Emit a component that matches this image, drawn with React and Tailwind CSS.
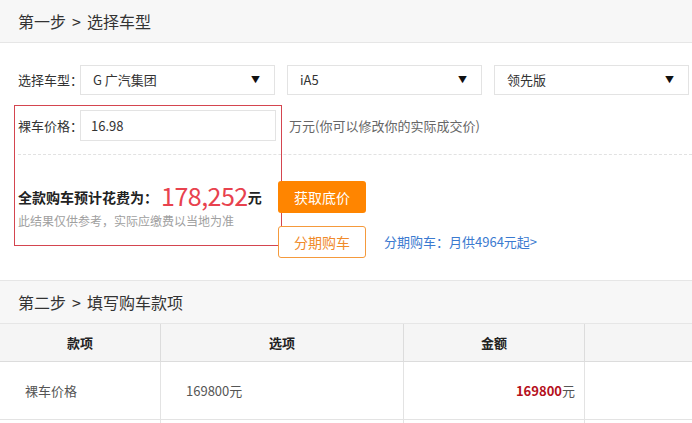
import React from 'react';

const Select = ({ value }) => (
  <div className="w-[195px] h-[30px] border border-[#e3e3e3] bg-white flex items-center justify-between pl-[12px] pr-[14px] text-[13px] text-[#333]">
    <span>{value}</span>
    <span className="text-[9px] text-[#111]">▼</span>
  </div>
);

const StepHeader = ({ first, second, top }) => (
  <div
    className={`bg-[#f7f7f7] border-b border-[#e6e6e6] flex items-center pl-[18px] text-[16px] text-[#333] ${
      top ? 'border-t h-[44px]' : 'h-[43px]'
    }`}
  >
    <span>{first}</span>
    <span className="mx-[6px]">&gt;</span>
    <span>{second}</span>
  </div>
);

const App = () => {
  return (
    <div
      className="relative w-[692px] h-[423px] overflow-hidden bg-white"
      style={{ fontFamily: "'Noto Sans CJK SC', 'Noto Sans', sans-serif" }}
    >
      {/* Step 1 */}
      <StepHeader first="第一步" second="选择车型" />

      {/* Model selects */}
      <div className="flex items-center mt-[22px] pl-[18px]">
        <span className="w-[62px] shrink-0 whitespace-nowrap text-[13px] text-[#333]">选择车型：</span>
        <div className="flex gap-[12px]">
          <Select value="G 广汽集团" />
          <Select value="iA5" />
          <Select value="领先版" />
        </div>
      </div>

      {/* Price input */}
      <div className="flex items-center mt-[15px] pl-[18px]">
        <span className="w-[62px] shrink-0 whitespace-nowrap text-[13px] text-[#333]">裸车价格：</span>
        <div className="w-[196px] h-[31px] border border-[#e3e3e3] bg-white flex items-center pl-[10px] text-[13px] text-[#333]">
          16.98
        </div>
        <span className="ml-[13px] text-[13px] text-[#666]">万元(你可以修改你的实际成交价)</span>
      </div>

      <div className="mt-[13px] ml-[18px] border-t border-dashed border-[#e2e2e2]" />

      {/* Total */}
      <div className="flex pt-[26px] pl-[18px]">
        <div className="w-[260px] shrink-0">
          <div className="h-[32px] flex items-center text-[#222]">
            <span className="text-[14px] font-bold whitespace-nowrap">全款购车预计花费为：</span>
            <span className="ml-[3px] text-[25px] leading-none text-[#e8424e] tracking-[-0.5px] -mt-[4px]">178,252</span>
            <span className="text-[14px] font-bold">元</span>
          </div>
          <div className="text-[12px] leading-[16px] text-[#a0a0a0] whitespace-nowrap">此结果仅供参考，实际应缴费以当地为准</div>
        </div>
        <div className="relative z-10 flex flex-col gap-[13px]">
          <button className="w-[88px] h-[32px] rounded-[3px] bg-[#ff8500] text-white text-[14px]">获取底价</button>
          <button className="w-[88px] h-[32px] rounded-[3px] border border-[#f59a3c] bg-white text-[#f08a2a] text-[14px]">
            分期购车
          </button>
        </div>
        <div className="flex items-end">
          <span className="ml-[18px] h-[32px] flex items-center text-[13px] text-[#3b7ad0] whitespace-nowrap">分期购车：月供4964元起&gt;</span>
        </div>
      </div>

      {/* Annotation box */}
      <div className="absolute left-[14px] top-[105px] w-[268px] h-[141px] border border-[#d4454f] pointer-events-none" />

      {/* Step 2 */}
      <div className="mt-[22px]">
        <StepHeader top first="第二步" second="填写购车款项" />
        <div className="grid grid-cols-[161px_243px_181px_1fr] text-[13px]">
          <div className="h-[38px] bg-[#f5f5f5] border-b border-r border-[#dcdcdc] flex items-center justify-center font-bold text-[#222]">款项</div>
          <div className="h-[38px] bg-[#f5f5f5] border-b border-r border-[#dcdcdc] flex items-center justify-center font-bold text-[#222]">选项</div>
          <div className="h-[38px] bg-[#f5f5f5] border-b border-r border-[#dcdcdc] flex items-center justify-center font-bold text-[#222]">金额</div>
          <div className="h-[38px] bg-[#f5f5f5] border-b border-[#dcdcdc]" />

          <div className="h-[58px] border-b border-r border-[#e3e3e3] flex items-center pl-[25px] text-[#555]">裸车价格</div>
          <div className="h-[58px] border-b border-r border-[#e3e3e3] flex items-center pl-[25px] text-[#555]">169800元</div>
          <div className="h-[58px] border-b border-r border-[#e3e3e3] flex items-center justify-end pr-[9px] text-[#555]">
            <span className="font-bold text-[#b5101c]">169800</span>元
          </div>
          <div className="h-[58px] border-b border-[#e3e3e3]" />

          <div className="h-[20px] border-r border-[#e3e3e3]" />
          <div className="h-[20px] border-r border-[#e3e3e3]" />
          <div className="h-[20px] border-r border-[#e3e3e3]" />
          <div className="h-[20px]" />
        </div>
      </div>
    </div>
  );
};

export default App;
